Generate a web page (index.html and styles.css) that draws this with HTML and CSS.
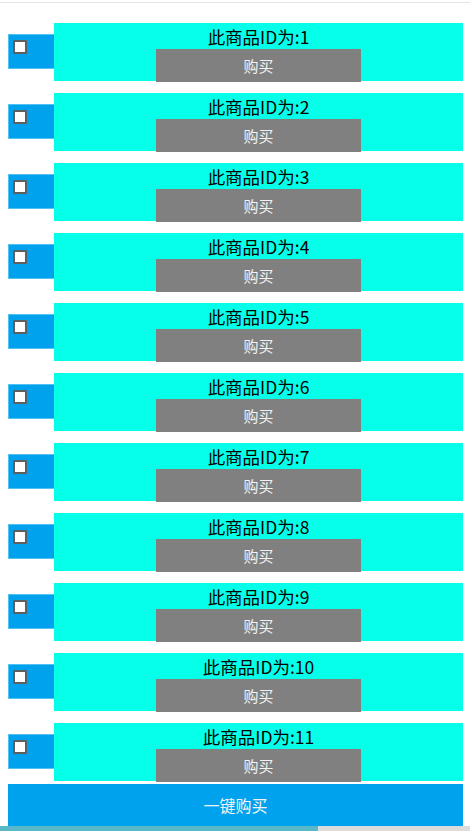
FILE: index.html
```html
<!DOCTYPE html>
<html lang="zh">
<head>
<meta charset="utf-8">
<title>商品列表</title>
<link rel="stylesheet" href="styles.css">
</head>
<body>
<div class="topline"></div>
<div class="list">
  <div class="row"><div class="check"><input type="checkbox" class="cb"></div><div class="item"><div class="title">此商品ID为:1</div><div class="buy">购买</div></div></div>
  <div class="row"><div class="check"><input type="checkbox" class="cb"></div><div class="item"><div class="title">此商品ID为:2</div><div class="buy">购买</div></div></div>
  <div class="row"><div class="check"><input type="checkbox" class="cb"></div><div class="item"><div class="title">此商品ID为:3</div><div class="buy">购买</div></div></div>
  <div class="row"><div class="check"><input type="checkbox" class="cb"></div><div class="item"><div class="title">此商品ID为:4</div><div class="buy">购买</div></div></div>
  <div class="row"><div class="check"><input type="checkbox" class="cb"></div><div class="item"><div class="title">此商品ID为:5</div><div class="buy">购买</div></div></div>
  <div class="row"><div class="check"><input type="checkbox" class="cb"></div><div class="item"><div class="title">此商品ID为:6</div><div class="buy">购买</div></div></div>
  <div class="row"><div class="check"><input type="checkbox" class="cb"></div><div class="item"><div class="title">此商品ID为:7</div><div class="buy">购买</div></div></div>
  <div class="row"><div class="check"><input type="checkbox" class="cb"></div><div class="item"><div class="title">此商品ID为:8</div><div class="buy">购买</div></div></div>
  <div class="row"><div class="check"><input type="checkbox" class="cb"></div><div class="item"><div class="title">此商品ID为:9</div><div class="buy">购买</div></div></div>
  <div class="row"><div class="check"><input type="checkbox" class="cb"></div><div class="item"><div class="title">此商品ID为:10</div><div class="buy">购买</div></div></div>
  <div class="row"><div class="check"><input type="checkbox" class="cb"></div><div class="item"><div class="title">此商品ID为:11</div><div class="buy">购买</div></div></div>
</div>
<div class="buyall">一键购买</div>
<div class="strip"><div class="strip-fill"></div></div>
</body>
</html>
```
FILE: styles.css
```css
html, body {
  margin: 0;
  padding: 0;
  height: 831px;
  overflow: hidden;
  background: #fff;
  font-family: "Noto Sans CJK SC", "Noto Sans", sans-serif;
}
.topline {
  margin-top: 2px;
  height: 1px;
  background: #e4e4e4;
}
.list {
  padding: 20px 7px 0 8px;
  display: flex;
  flex-direction: column;
  gap: 12px;
}
.row {
  display: flex;
  align-items: flex-start;
  height: 58px;
}
.check {
  box-sizing: border-box;
  width: 46px;
  height: 35px;
  margin-top: 11px;
  background: #00a2ee;
  border: 1px solid #52c2f4;
  border-right: none;
  padding: 5px 0 0 4px;
}
.cb {
  appearance: none;
  -webkit-appearance: none;
  display: block;
  margin: 0;
  box-sizing: border-box;
  width: 14px;
  height: 14px;
  background: #fff;
  border: 2px solid #5f5f5f;
  border-radius: 1px;
}
.item {
  flex: 1;
  height: 58px;
  background: #05ffe9;
  display: flex;
  flex-direction: column;
  align-items: center;
}
.title {
  height: 26px;
  line-height: 27px;
  font-size: 17.5px;
  color: #000;
}
.buy {
  width: 50%;
  height: 33px;
  line-height: 33px;
  background: #808080;
  color: #f2f2f2;
  font-size: 15px;
  text-align: center;
}
.buyall {
  margin: 3px 7px 0 8px;
  height: 42px;
  line-height: 42px;
  background: #00a2ee;
  color: #f2f2f2;
  font-size: 16px;
  text-align: center;
}
.strip {
  height: 5px;
  background: #dcdcdc;
}
.strip-fill {
  width: 318px;
  height: 5px;
  background: #5ab9c9;
}
```
